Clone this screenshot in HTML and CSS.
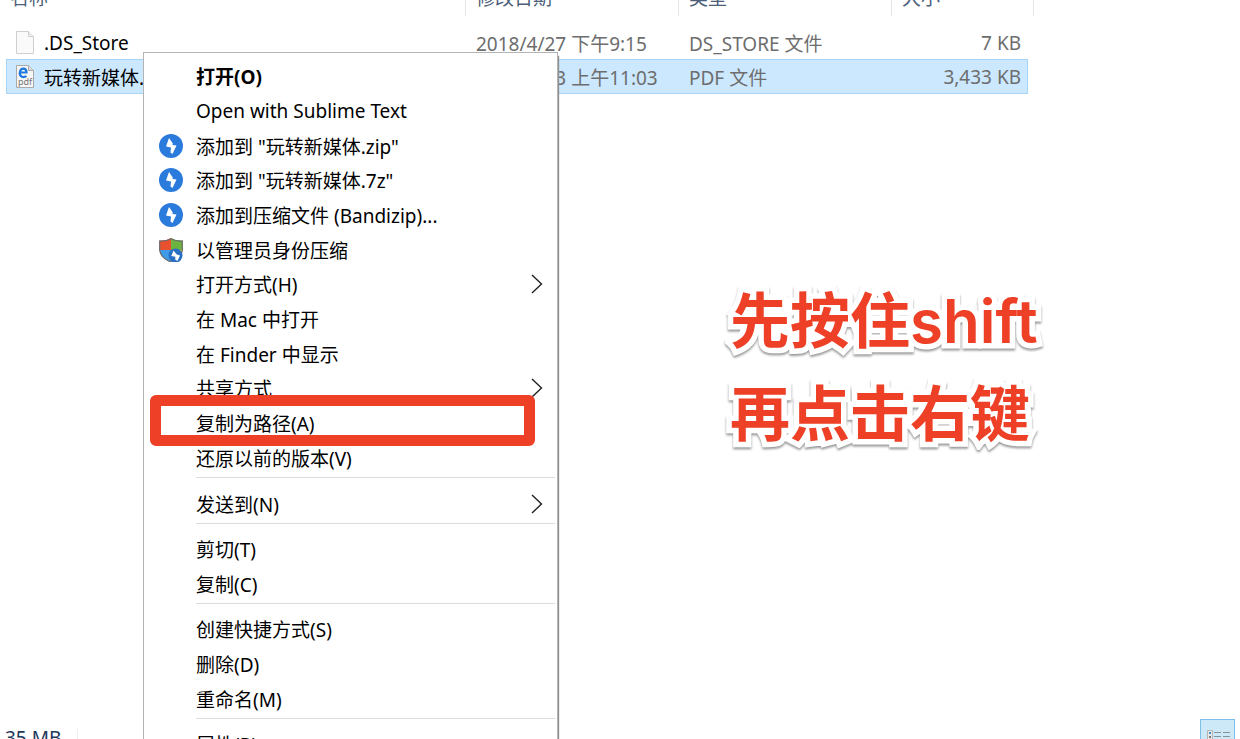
FILE: index.html
```html
<!DOCTYPE html>
<html lang="zh-CN">
<head>
  <meta charset="UTF-8" />
  <meta name="viewport" content="width=device-width, initial-scale=1" />
  <title>复制为路径</title>
  <link rel="stylesheet" href="styles.css">
</head>
<body>

  <!-- shared icons -->
  <svg class="symbols" aria-hidden="true">
    <symbol id="bandizip" viewBox="0 0 24 24">
      <circle cx="12" cy="12" r="12" fill="#2b7bdc" />
      <path d="M10 4L13.800 9.500L13.500 11L17.500 11.500L13.500 20L11.500 18.500L12 13.500L7 12.500Z" fill="#fff" />
    </symbol>
    <symbol id="arrow" viewBox="0 0 12 20">
      <path d="M1 1L10.500 10L1 19" fill="none" stroke="#222" stroke-width="1.400" />
    </symbol>
  </svg>

  <main class="explorer">
    <div class="list">
      <table class="files">
        <colgroup>
          <col class="col-name"><col class="col-date"><col class="col-type"><col class="col-size"><col class="col-end">
        </colgroup>
        <thead>
          <tr><th>名称</th><th>修改日期</th><th>类型</th><th colspan="2">大小</th></tr>
        </thead>
        <tbody>
          <tr>
            <td>
              <div class="file">
                <svg width="18" height="24" viewBox="0 0 18 24">
                  <path d="M.5 .5H12.500L17.500 5.500V22.500H.5Z" fill="#fafafa" stroke="#cfcfcf" />
                  <path d="M12.500 .5V5.500H17.500" fill="#eee" stroke="#cfcfcf" />
                </svg>
                .DS_Store
              </div>
            </td>
            <td>2018/4/27 下午9:15</td>
            <td>DS_STORE 文件</td>
            <td class="size">7 KB</td>
          </tr>
          <tr class="selected">
            <td>
              <div class="file">
                <svg width="18" height="24" viewBox="0 0 18 24">
                  <path d="M.5 .5H12.500L17.500 5.500V22.500H.5Z" fill="#f6f6f6" stroke="#a9a9a9" />
                  <path d="M12.500 .5V5.500H17.500" fill="#ddd" stroke="#a9a9a9" />
                  <path d="M4 7.500H10.500C10.500 2.500 4.500 2.300 3.800 7.500C3.300 12 8 13 10.500 11" fill="none" stroke="#1f7ae0" stroke-width="2.200" />
                  <text x="9" y="20" class="pdf-mark">pdf</text>
                </svg>
                玩转新媒体.pdf
              </div>
            </td>
            <td>2018/4/23 上午11:03</td>
            <td>PDF 文件</td>
            <td class="size">3,433 KB</td>
          </tr>
        </tbody>
      </table>
    </div>

    <footer class="status">
      <span class="total">35 MB</span>
      <button class="view-btn" aria-label="详细信息">
        <svg width="24" height="22" viewBox="0 0 24 22">
          <path d="M.5 .5H5.500V22H.5Z" fill="#e8e8e8" stroke="#b5b5b5" />
          <path d="M2 3H4" stroke="#3b8fd0" stroke-width="2" />
          <path d="M2 7H4" stroke="#777" stroke-width="2" />
          <path d="M2 11H4" stroke="#e0442e" stroke-width="2" />
          <path d="M7 2.500H14M16 2.500H23M7 6.500H14M16 6.500H23M7 10.500H14M16 10.500H23M7 14.500H14M16 14.500H23" stroke="#8b9298" />
        </svg>
      </button>
    </footer>
  </main>

  <!-- context menu -->
  <div class="menu" role="menu">
    <div class="group">
      <button class="item default" role="menuitem">打开(O)</button>
      <button class="item" role="menuitem">Open with Sublime Text</button>
      <button class="item" role="menuitem"><svg class="icon"><use href="#bandizip" /></svg>添加到 "玩转新媒体.zip"</button>
      <button class="item" role="menuitem"><svg class="icon"><use href="#bandizip" /></svg>添加到 "玩转新媒体.7z"</button>
      <button class="item" role="menuitem"><svg class="icon"><use href="#bandizip" /></svg>添加到压缩文件 (Bandizip)...</button>
      <button class="item" role="menuitem">
        <svg class="icon" viewBox="0 0 24 24">
          <path d="M12 0Q17 3 23.500 2.500V12H12Z" fill="#6cb33f" />
          <path d="M12 0Q7 3 .5 2.500V12H12Z" fill="#e8502f" />
          <path d="M.5 12H12V24Q1 20 .5 12Z" fill="#3d9be8" />
          <path d="M12 12H23.500Q23 20 12 24Z" fill="#f3c33c" />
          <path d="M12 .7Q17 3.400 23.300 3V12Q22.500 20 12 24Q1.500 20 .7 12V3Q7 3.400 12 .7Z" fill="none" stroke="#6b6b6b" stroke-width="1.200" />
          <circle cx="16.500" cy="17.500" r="7" fill="#2b6fc4" />
          <path d="M14.500 12.500L17.800 16.500L21 17.500L18.500 23L16.200 21.500L16.400 18.800L12.300 18Z" fill="#fff" />
        </svg>以管理员身份压缩
      </button>
      <button class="item" role="menuitem">打开方式(H)<svg class="more"><use href="#arrow" /></svg></button>
      <button class="item" role="menuitem">在 Mac 中打开</button>
      <button class="item" role="menuitem">在 Finder 中显示</button>
      <button class="item" role="menuitem">共享方式<svg class="more"><use href="#arrow" /></svg></button>
      <button class="item marked" role="menuitem">复制为路径(A)</button>
      <button class="item" role="menuitem">还原以前的版本(V)</button>
    </div>
    <div class="group">
      <button class="item" role="menuitem">发送到(N)<svg class="more"><use href="#arrow" /></svg></button>
    </div>
    <div class="group">
      <button class="item" role="menuitem">剪切(T)</button>
      <button class="item" role="menuitem">复制(C)</button>
    </div>
    <div class="group">
      <button class="item" role="menuitem">创建快捷方式(S)</button>
      <button class="item" role="menuitem">删除(D)</button>
      <button class="item" role="menuitem">重命名(M)</button>
    </div>
    <div class="group">
      <button class="item" role="menuitem">属性(R)</button>
    </div>
  </div>

  <p class="note">先按住shift<br>再点击右键</p>

</body>
</html>
```

FILE: styles.css
```css
* {
  box-sizing: border-box;
}
body {
  position: relative;
  height: 100vh;
  margin: 0;
  overflow: hidden;
  background: #fff;
  font-family: "Noto Sans", "Noto Sans CJK SC", sans-serif;
  font-size: 19px;
  color: #000;
}
button {
  font: inherit;
  color: inherit;
  cursor: pointer;
}
.symbols {
  position: absolute;
  width: 0;
  height: 0;
}

/* explorer window */
.explorer {
  display: flex;
  flex-direction: column;
  height: 100%;
}
.list {
  flex: 1;
  padding-left: 6px;
  overflow: hidden;
}

/* file table, header is scrolled half out of view */
.files {
  margin-top: -18px;
  table-layout: fixed;
  width: 1028px;
  border-collapse: separate;
  border-spacing: 0;
  white-space: nowrap;
}
.col-name { width: 460px; }
.col-date { width: 213px; }
.col-type { width: 213px; }
.col-size { width: 136px; }
.col-end { width: 6px; }
.files th {
  height: 34px;
  padding: 0 10px 2px;
  border-right: 1px solid #e5e5e5;
  color: #4c607a;
  font-weight: normal;
  line-height: 28px;
  text-align: left;
}
.files th:first-child {
  padding-left: 4px;
}
.files tbody::before {
  content: "";
  display: block;
  height: 10px;
}
.files td {
  height: 33px;
  padding: 0 10px;
  color: #6d6d6d;
}
.files .size {
  padding-right: 7px;
  text-align: right;
}
.file {
  display: flex;
  align-items: center;
  gap: 10px;
  color: #000;
}
.files .selected td {
  height: 35px;
  background: #cce8ff;
  box-shadow: inset 0 1px #a6d5fa, inset 0 -1px #a6d5fa;
}
.files .selected td:first-child {
  box-shadow: inset 1px 1px #a6d5fa, inset 0 -1px #a6d5fa;
}
.files .selected .size {
  box-shadow: inset 0 1px #a6d5fa, inset -1px -1px #a6d5fa;
}
.pdf-mark {
  font-size: 9px;
  fill: #777;
  text-anchor: middle;
}

/* status bar */
.status {
  display: flex;
  justify-content: space-between;
  align-items: flex-start;
  height: 20px;
  padding: 0 5px;
  overflow: hidden;
  color: #1e395b;
}
.total {
  margin-top: 10px;
  padding-right: 16px;
  line-height: 18px;
  border-right: 1px solid #eee;
}
.view-btn {
  width: 35px;
  height: 35px;
  padding: 8px 0 0 6px;
  border: 1px solid #7cc0ea;
  background: #cde8f6;
}
.view-btn svg {
  display: block;
}

/* context menu */
.menu {
  position: absolute;
  top: 52px;
  left: 143px;
  width: 415px;
  padding: 6px 2px;
  background: #fff;
  border: 1px solid #b4b4b4;
  box-shadow: 1px 4px 1px #909090;
}
.group + .group::before {
  content: "";
  display: block;
  height: 1px;
  margin: 2px 0 8px 50px;
  background: #dcdcdc;
}
.item {
  position: relative;
  display: flex;
  align-items: center;
  width: 100%;
  height: 35px;
  padding: 0 12px 0 50px;
  border: none;
  background: none;
  text-align: left;
  white-space: nowrap;
}
.item:nth-child(3n+1) {
  height: 34px;
}
.group:not(:last-child) .item:only-child {
  height: 35px;
}
.item:hover {
  background: #f2f2f2;
}
.default {
  font-weight: bold;
}
.icon {
  width: 24px;
  height: 24px;
  margin: 0 13px 0 -37px;
}
.more {
  width: 12px;
  height: 20px;
  margin-left: auto;
}

/* red frame round the marked item */
.marked::after {
  content: "";
  position: absolute;
  inset: -10px 20px -6px 4px;
  border: 11px solid #ee4027;
  border-radius: 6px;
}

/* note */
.note {
  position: absolute;
  top: 275px;
  left: 730px;
  margin: 0;
  color: #ee4027;
  font-family: Inter, "Noto Sans CJK SC", sans-serif;
  font-size: 60px;
  font-weight: 600;
  line-height: 93px;
  white-space: nowrap;
  -webkit-text-stroke: 11px #fff;
  stroke-linejoin: round;
  paint-order: stroke fill;
  filter: drop-shadow(0 2px 1px rgba(0, 0, 0, 0.4));
}
```
